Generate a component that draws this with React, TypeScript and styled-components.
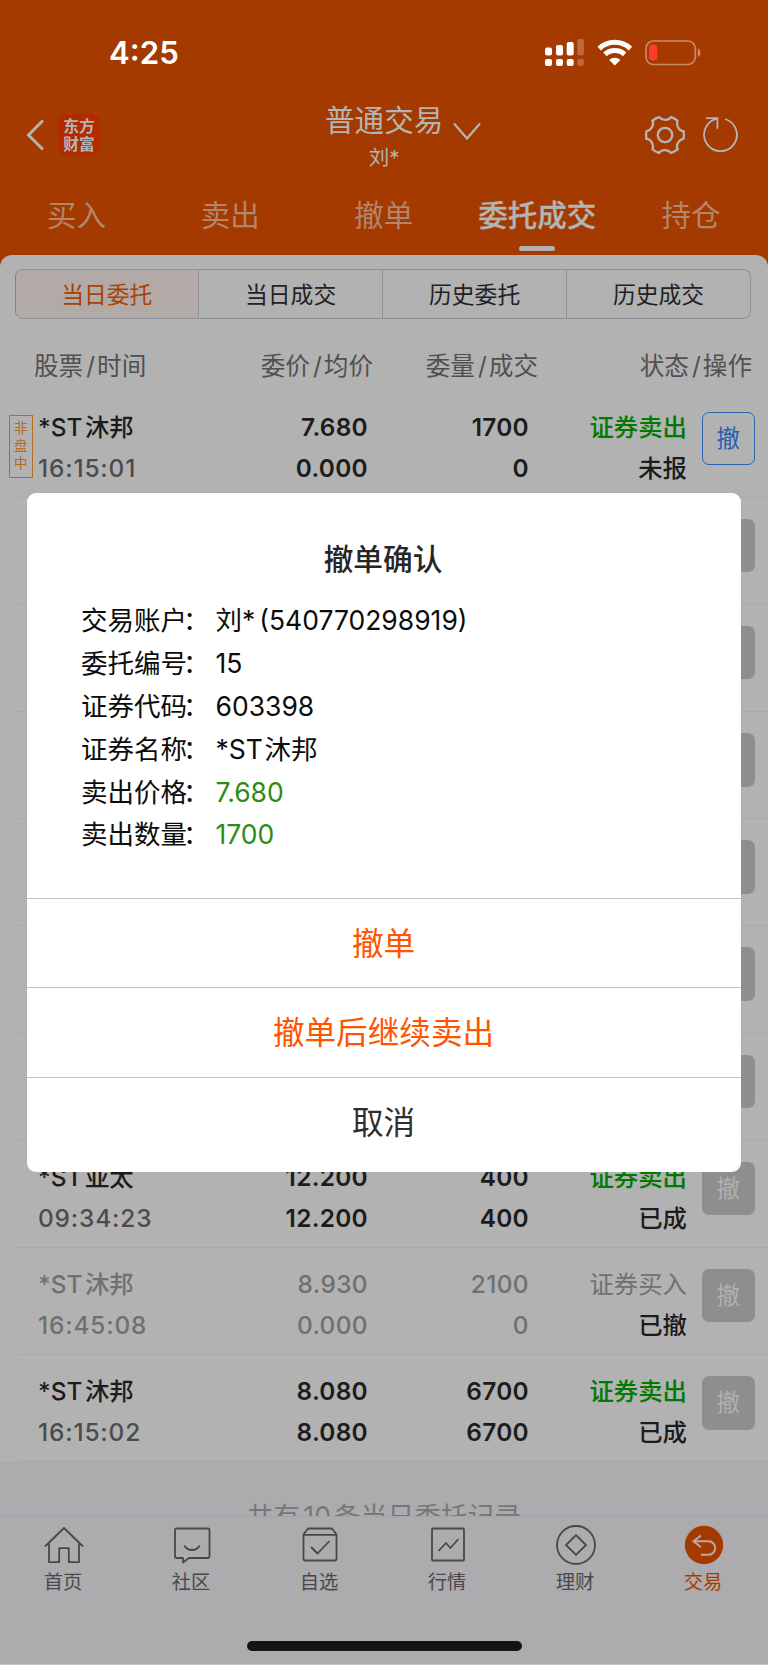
import React from "react";
import styled, { createGlobalStyle } from "styled-components";

const Global = createGlobalStyle`
  * { box-sizing: border-box; }
  body { margin: 0; background: #b2b2b2; }
`;

const Screen = styled.div`
  position: relative;
  width: 768px;
  height: 1665px;
  overflow: hidden;
  display: flex;
  flex-direction: column;
  background: #a43a00;
  color: #1c1c1c;
  font-family: Inter, "Noto Sans CJK SC", sans-serif;
  white-space: nowrap;
`;

const StatusBar = styled.div`
  height: 105px;
  padding: 0 66px 0 109px;
  display: flex;
  justify-content: space-between;
  align-items: center;
  color: #fff;
`;
const Clock = styled.span`
  font-size: 31.2px;
  font-weight: 600;
  line-height: 36px;
`;

const NavBar = styled.div`
  height: 71px;
  padding: 0 29px 0 26px;
  display: grid;
  grid-template-columns: 250px minmax(0, 1fr) 250px;
  color: #b4b4b4;
`;
const NavLeft = styled.div`
  display: flex;
  align-items: flex-start;
  gap: 14px;
  padding-top: 9px;
`;
const BackIcon = styled.svg`
  margin-top: 5px;
`;
const Logo = styled.div`
  width: 42px;
  height: 42px;
  border-radius: 8px;
  background: #b22a00;
  display: flex;
  flex-direction: column;
  align-items: center;
  justify-content: center;
  font-family: "Noto Sans CJK SC", sans-serif;
  font-size: 15.8px;
  font-weight: 700;
  line-height: 18px;
  padding-bottom: 1px;
`;
const NavCenter = styled.div`
  display: flex;
  gap: 10px;
  padding-left: 49px;
`;
const TitleBlock = styled.div`
  display: flex;
  flex-direction: column;
  align-items: center;
  margin-top: -2px;
`;
const Title = styled.div`
  font-size: 29.6px;
  line-height: 34px;
`;
const User = styled.div`
  font-size: 20.5px;
  line-height: 24px;
  margin-top: 8.5px;
`;
const NavRight = styled.div`
  display: flex;
  justify-content: flex-end;
  align-items: flex-start;
  gap: 17px;
  padding-top: 9px;
`;

const Tabs = styled.div`
  height: 79px;
  display: grid;
  grid-template-columns: repeat(5, 1fr);
`;
const Tab = styled.div<{ $active?: boolean }>`
  display: flex;
  flex-direction: column;
  align-items: center;
  padding-top: 21px;
  padding-right: 0.5px;
  font-size: 29.5px;
  line-height: 36px;
  font-weight: ${(p) => (p.$active ? 500 : 400)};
  -webkit-text-stroke: ${(p) => (p.$active ? "0.3px #b4b4b4" : "0")};
  color: ${(p) => (p.$active ? "#b4b4b4" : "#b3856c")};
`;
const TabMark = styled.div`
  width: 36px;
  height: 5.7px;
  margin-top: 12.8px;
  border-radius: 3px;
  background: #b2b2b2;
`;

const Panel = styled.div`
  flex: 1;
  min-height: 0;
  display: flex;
  flex-direction: column;
  border-radius: 12px 12px 0 0;
  background: #b2b2b2;
  overflow: hidden;
`;
const Segments = styled.div`
  margin: 14px 17px 0 14.5px;
  height: 50px;
  flex: none;
  display: grid;
  grid-template-columns: 182.6px 184px 184px 1fr;
  border: 1px solid #919299;
  border-left-color: #b5714f;
  border-radius: 8px;
  overflow: hidden;
`;
const Segment = styled.div<{ $active?: boolean }>`
  display: flex;
  align-items: center;
  justify-content: center;
  padding-top: 1.5px;
  font-size: 22.8px;
  line-height: 28px;
  color: ${(p) => (p.$active ? "#a94205" : "#222")};
  background: ${(p) => (p.$active ? "#b2aaa7" : "transparent")};
  & + & { border-left: 1px solid #919299; }
`;

const HeadRow = styled.div`
  height: 71.6px;
  flex: none;
  padding: 31.5px 16px 0 34px;
  display: grid;
  grid-template-columns: 224px 115px 165px 1fr;
  font-size: 24.6px;
  line-height: 30px;
  color: #505050;
`;
const HeadCell = styled.span<{ $right?: boolean }>`
  justify-self: ${(p) => (p.$right ? "end" : "start")};
`;
const Slash = styled.span`
  margin: 0 2px 0 3px;
`;
const Spaced = styled.span<{ $after?: number; $before?: number }>`
  margin-left: ${(p) => p.$before ?? 0}px;
  margin-right: ${(p) => p.$after ?? 0}px;
`;

const Row = styled.div`
  position: relative;
  height: 107.16px;
  flex: none;
  margin-left: 18px;
  padding: 21px 13px 0 20px;
  display: grid;
  grid-template-columns: 170px 160px 161px 158px 1fr;
  border-bottom: 1px solid #a8a8aa;
`;
const Cell = styled.div<{ $right?: boolean }>`
  display: flex;
  flex-direction: column;
  gap: 11px;
  align-items: ${(p) => (p.$right ? "flex-end" : "flex-start")};
`;
const Line = styled.span<{ $color?: string; $weight?: number; $track?: number }>`
  height: 30px;
  line-height: 30px;
  font-size: 24.4px;
  font-weight: ${(p) => p.$weight ?? 500};
  letter-spacing: ${(p) => p.$track ?? 0}px;
  color: ${(p) => p.$color ?? "#1c1c1c"};
`;
const CancelButton = styled.div<{ $enabled?: boolean }>`
  width: 53.5px;
  height: 53.5px;
  justify-self: end;
  border-radius: 7px;
  border: ${(p) => (p.$enabled ? "1.5px solid #2a63b0" : "0")};
  background: ${(p) => (p.$enabled ? "transparent" : "#8e8e8e")};
  color: ${(p) => (p.$enabled ? "#2560b0" : "#b0b0b0")};
  font-size: 23.5px;
  line-height: ${(p) => (p.$enabled ? 52 : 54)}px;
  text-align: center;
`;
const SessionTag = styled.div`
  position: absolute;
  left: -9px;
  top: 24.5px;
  width: 23.5px;
  height: 63px;
  padding-top: 4px;
  border: 1px solid #b86c20;
  color: #b8681a;
  font-size: 13.5px;
  line-height: 17.4px;
  text-align: center;
  white-space: normal;
  word-break: break-all;
`;

const Footer = styled.div`
  flex: none;
  height: 54px;
  overflow: hidden;
  padding-top: 36.5px;
  background: #acacae;
  text-align: center;
  font-size: 26.6px;
  letter-spacing: 0.15px;
  line-height: 34px;
  color: #777779;
`;

const TabBar = styled.div`
  flex: none;
  height: 149px;
  border-top: 1px solid #a3a3aa;
  border-bottom: 1px solid #c6c6c8;
  background: #acacae;
  display: flex;
  flex-direction: column;
  align-items: center;
`;
const TabItems = styled.div`
  width: 100%;
  height: 124px;
  display: grid;
  grid-template-columns: repeat(6, 1fr);
`;
const TabItem = styled.div<{ $active?: boolean }>`
  display: flex;
  flex-direction: column;
  align-items: center;
  padding-top: 8px;
  color: ${(p) => (p.$active ? "#a83c00" : "#48484a")};
  font-size: 19.3px;
  line-height: 24px;
`;
const TabLabel = styled.span`
  margin-top: 5px;
  padding-right: 2px;
`;
const HomeIndicator = styled.div`
  width: 275px;
  height: 9.5px;
  border-radius: 5px;
  background: #141414;
`;

const Dialog = styled.div`
  position: absolute;
  left: 27px;
  top: 493px;
  width: 714px;
  height: 678.5px;
  border-radius: 9px;
  background: #fff;
  display: flex;
  flex-direction: column;
`;
const DialogTitle = styled.div`
  padding-top: 48px;
  padding-bottom: 22px;
  padding-right: 2px;
  text-align: center;
  font-size: 29.7px;
  line-height: 36px;
  font-weight: 500;
  color: #262626;
`;
const Facts = styled.div`
  height: 299px;
  padding-left: 54px;
`;
const Fact = styled.div`
  height: 42.9px;
  display: grid;
  grid-template-columns: 134.5px 1fr;
  font-size: 26.5px;
  line-height: 43px;
  color: #0c0c0c;
`;
const Colon = styled.span`
  margin-left: -4px;
`;
const FactValue = styled.span<{ $sell?: boolean }>`
  color: ${(p) => (p.$sell ? "#2c8c14" : "#0c0c0c")};
`;
const Action = styled.div<{ $plain?: boolean }>`
  height: 89.3px;
  border-top: 1px solid #c4c4c4;
  padding-right: 1px;
  text-align: center;
  font-size: 31.6px;
  line-height: 90px;
  color: ${(p) => (p.$plain ? "#2e2e2e" : "#ff5500")};
`;

const StatusIcons = () => (
  <svg width="158" height="30" viewBox="544 37 158 30">
    <g fill="#fff">
      <rect x="545" y="46.5" width="7" height="8" rx="2" />
      <rect x="556" y="44" width="7" height="10.5" rx="2" />
      <rect x="566.7" y="41" width="7" height="13.5" rx="2" />
      <rect x="545" y="58" width="7" height="7" rx="2" />
      <rect x="556" y="58" width="7" height="7" rx="2" />
      <rect x="566.7" y="58" width="7" height="7" rx="2" />
    </g>
    <g fill="#bb6a40">
      <rect x="577.3" y="38" width="6.6" height="16.5" rx="2" />
      <rect x="577.3" y="58" width="6.6" height="7" rx="2" />
    </g>
    <g fill="none" stroke="#fff" strokeWidth="5">
      <path d="M599.2 47.6a22.6 22.6 0 0 1 31.2 0" />
      <path d="M605 53.3a14.5 14.5 0 0 1 19.6 0" />
    </g>
    <path d="M609.2 58.9a8.2 8.2 0 0 1 11.2 0L614.8 64.4z" fill="#fff" />
    <rect x="646" y="40" width="49.3" height="23.5" rx="7.5" fill="none" stroke="#c98a6a" strokeWidth="1.7" />
    <rect x="649" y="43.5" width="8.2" height="16" rx="3.5" fill="#ff3b30" />
    <path d="M697.8 47.3c3.6 1.4 3.6 7.4 0 8.8z" fill="#c98a6a" />
  </svg>
);

const GearIcon = () => (
  <svg width="42" height="42" viewBox="-21 -21 42 42" fill="none" stroke="#b4b4b4" strokeWidth="2.3" strokeLinecap="round" strokeLinejoin="round">
    <circle r="7.2" />
    {[0, 60, 120, 180, 240, 300].map((a) => (
      <path key={a} transform={`rotate(${a})`} d="M18.6-3.6Q19.2 0 18.6 3.6C13.9 4.6 10.6 9.6 12.42 14.31" />
    ))}
  </svg>
);

const RefreshIcon = () => (
  <svg width="36" height="40" viewBox="703 115 36 40" fill="none" stroke="#b4b4b4" strokeWidth="1.8">
    <path d="M725 120A16.4 16.4 0 1 1 717.2 119.7" />
    <path d="M706 119.2H717.4V129.8" />
  </svg>
);

const tabIcons: Record<string, React.ReactNode> = {
  home: (
    <>
      <path d="M1 20.5 20 2 39 20.5" />
      <path d="M5 17.5V36.2H15.2V22.2H24.8V36.2H35V17.5" />
    </>
  ),
  community: (
    <>
      <path d="M4.5 2.5H36a1.5 1.5 0 0 1 1.5 1.5V30.5a1.5 1.5 0 0 1-1.5 1.5H17L11 36.5V32H4.5A1.5 1.5 0 0 1 3 30.5V4a1.5 1.5 0 0 1 1.5-1.5z" />
      <path d="M12.3 19.5c3.2 6 12.2 6 15.4 0" />
    </>
  ),
  watchlist: (
    <>
      <path d="M3.5 8.5 8 2.5H32L36.5 8.5V33a1.5 1.5 0 0 1-1.5 1.5H5A1.5 1.5 0 0 1 3.5 33z" />
      <path d="M3.5 8.8H36.5M11 21 17.5 27.5 29.5 15" />
    </>
  ),
  market: (
    <>
      <rect x="4" y="2.5" width="32" height="32" rx="1" />
      <path d="M10.5 25 18 17 22.3 22 30.5 13" />
    </>
  ),
  wealth: (
    <>
      <circle cx="20" cy="19" r="19" />
      <path d="M20 9.2 30 19 20 28.8 10 19z" />
    </>
  ),
};

const TabGlyph = ({ name }: { name: string }) => (
  <svg width="40" height="40" viewBox="0 -1 40 40" fill="none" stroke="#48484a" strokeWidth="1.8" strokeLinejoin="round">
    {tabIcons[name]}
  </svg>
);

const TradeGlyph = () => (
  <svg width="40" height="40" viewBox="0 -1 40 40" fill="none">
    <circle cx="20" cy="19" r="19.2" fill="#a43a00" />
    <path d="M17 9.5 9.5 15.3 17 21.2M10 15.3H24.5a6.6 6.6 0 0 1 0 13.4H17" stroke="#b9aaa2" strokeWidth="2" />
  </svg>
);

type Order = {
  name?: string;
  time?: string;
  price?: string;
  avg?: string;
  qty?: string;
  filled?: string;
  side?: string;
  state?: string;
  tag?: boolean;
  open?: boolean;
  cancelled?: boolean;
};

const orders: Order[] = [
  { name: "沐邦", time: "16:15:01", price: "7.680", avg: "0.000", qty: "1700", filled: "0", side: "证券卖出", state: "未报", tag: true, open: true },
  {}, {}, {}, {}, {}, {},
  { name: "亚太", time: "09:34:23", price: "12.200", avg: "12.200", qty: "400", filled: "400", side: "证券卖出", state: "已成" },
  { name: "沐邦", time: "16:45:08", price: "8.930", avg: "0.000", qty: "2100", filled: "0", side: "证券买入", state: "已撤", cancelled: true },
  { name: "沐邦", time: "16:15:02", price: "8.080", avg: "8.080", qty: "6700", filled: "6700", side: "证券卖出", state: "已成" },
];

const StockName = ({ name, gap }: { name: string; gap: number }) => (
  <>
    <Spaced $after={gap}>*ST</Spaced>
    {name}
  </>
);

const OrderRow = ({ o }: { o: Order }) => {
  const main = o.cancelled ? "#707070" : "#1c1c1c";
  const figures = { $color: main, $weight: o.cancelled ? 500 : 600, $track: o.cancelled ? 0.4 : 0.3 };
  return (
    <Row>
      {o.tag && <SessionTag>非盘中</SessionTag>}
      <Cell>
        <Line $color={main}>{o.name && <StockName name={o.name} gap={2.5} />}</Line>
        <Line $color={o.cancelled ? "#707070" : "#4c4c4c"} $track={0.85}>{o.time}</Line>
      </Cell>
      <Cell $right>
        <Line {...figures}>{o.price}</Line>
        <Line {...figures}>{o.avg}</Line>
      </Cell>
      <Cell $right>
        <Line {...figures}>{o.qty}</Line>
        <Line {...figures}>{o.filled}</Line>
      </Cell>
      <Cell $right>
        <Line $color={o.cancelled ? "#707070" : "#007a00"} $weight={o.cancelled ? 400 : 500}>{o.side}</Line>
        <Line>{o.state}</Line>
      </Cell>
      <CancelButton $enabled={o.open}>撤</CancelButton>
    </Row>
  );
};

const facts: { label: string; value: React.ReactNode; sell?: boolean }[] = [
  { label: "交易账户", value: <>刘*<Spaced $before={4}>(540770298919)</Spaced></> },
  { label: "委托编号", value: "15" },
  { label: "证券代码", value: "603398" },
  { label: "证券名称", value: <StockName name="沐邦" gap={1.5} /> },
  { label: "卖出价格", value: "7.680", sell: true },
  { label: "卖出数量", value: "1700", sell: true },
];

const tabs = ["买入", "卖出", "撤单", "委托成交", "持仓"];
const segments = ["当日委托", "当日成交", "历史委托", "历史成交"];
const headings = [
  ["股票", "时间"],
  ["委价", "均价"],
  ["委量", "成交"],
  ["状态", "操作"],
];
const bottomTabs = [
  { icon: "home", label: "首页" },
  { icon: "community", label: "社区" },
  { icon: "watchlist", label: "自选" },
  { icon: "market", label: "行情" },
  { icon: "wealth", label: "理财" },
];

export default function App() {
  return (
    <Screen lang="zh-CN">
      <Global />
      <StatusBar>
        <Clock>4:25</Clock>
        <StatusIcons />
      </StatusBar>
      <NavBar>
        <NavLeft>
          <BackIcon width="18" height="32" viewBox="0 0 18 32" fill="none" stroke="#b4b4b4" strokeWidth="3">
            <path d="M17 1.5 2.5 16 17 30.5" />
          </BackIcon>
          <Logo>
            <span>东方</span>
            <span>财富</span>
          </Logo>
        </NavLeft>
        <NavCenter>
          <TitleBlock>
            <Title>普通交易</Title>
            <User>刘*</User>
          </TitleBlock>
          <svg width="28" height="36" viewBox="0 0 28 36" fill="none" stroke="#b4b4b4" strokeWidth="2.2">
            <path d="M1 18.5 14 33.5 27 18.5" />
          </svg>
        </NavCenter>
        <NavRight>
          <GearIcon />
          <RefreshIcon />
        </NavRight>
      </NavBar>
      <Tabs>
        {tabs.map((t) => (
          <Tab key={t} $active={t === "委托成交"}>
            {t}
            {t === "委托成交" && <TabMark />}
          </Tab>
        ))}
      </Tabs>
      <Panel>
        <Segments>
          {segments.map((s, i) => (
            <Segment key={s} $active={i === 0}>{s}</Segment>
          ))}
        </Segments>
        <HeadRow>
          {headings.map(([a, b], i) => (
            <HeadCell key={a} $right={i > 0}>
              {a}<Slash>/</Slash>{b}
            </HeadCell>
          ))}
        </HeadRow>
        {orders.map((o, i) => (
          <OrderRow key={i} o={o} />
        ))}
        <Footer>
          共有<Spaced $before={3} $after={3}>10</Spaced>条当日委托记录
        </Footer>
        <TabBar>
          <TabItems>
            {bottomTabs.map((t) => (
              <TabItem key={t.label}>
                <TabGlyph name={t.icon} />
                <TabLabel>{t.label}</TabLabel>
              </TabItem>
            ))}
            <TabItem $active>
              <TradeGlyph />
              <TabLabel>交易</TabLabel>
            </TabItem>
          </TabItems>
          <HomeIndicator />
        </TabBar>
      </Panel>
      <Dialog>
        <DialogTitle>撤单确认</DialogTitle>
        <Facts>
          {facts.map((f) => (
            <Fact key={f.label}>
              <span>{f.label}<Colon>：</Colon></span>
              <FactValue $sell={f.sell}>{f.value}</FactValue>
            </Fact>
          ))}
        </Facts>
        <Action>撤单</Action>
        <Action>撤单后继续卖出</Action>
        <Action $plain>取消</Action>
      </Dialog>
    </Screen>
  );
}
